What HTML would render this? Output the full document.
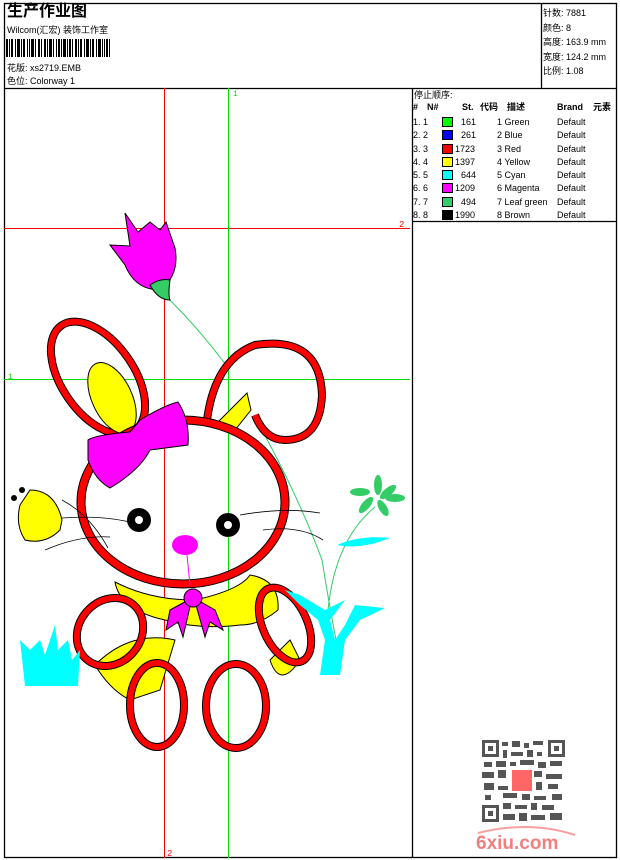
<!DOCTYPE html>
<html><head><meta charset="utf-8"><style>
*{margin:0;padding:0;box-sizing:border-box}
body{width:620px;height:860px;background:#fff;position:relative;overflow:hidden;font-family:"Liberation Sans","Noto Sans CJK SC",sans-serif;color:#000}
.a{position:absolute;white-space:nowrap}
.s{font-size:9px;line-height:11px}
</style></head><body>
<svg width="620" height="860" style="position:absolute;left:0;top:0" xmlns="http://www.w3.org/2000/svg">
<g fill="none" stroke="#000" stroke-width="1.3">
<rect x="4.5" y="3.5" width="612" height="854"/>
<line x1="4" y1="88.5" x2="617" y2="88.5"/>
<line x1="541.5" y1="3" x2="541.5" y2="88"/>
<line x1="412.5" y1="88" x2="412.5" y2="858"/>
<line x1="412" y1="221.5" x2="617" y2="221.5"/>
</g>
<g fill="#000">
<rect x="6" y="39" width="2" height="18"/><rect x="9" y="39" width="1" height="18"/><rect x="11" y="39" width="2" height="18"/><rect x="15" y="39" width="1" height="18"/><rect x="17" y="39" width="3" height="18"/><rect x="21" y="39" width="1" height="18"/><rect x="23" y="39" width="2" height="18"/><rect x="27" y="39" width="1" height="18"/><rect x="29" y="39" width="1" height="18"/><rect x="31" y="39" width="3" height="18"/><rect x="35" y="39" width="1" height="18"/><rect x="38" y="39" width="2" height="18"/><rect x="41" y="39" width="1" height="18"/><rect x="44" y="39" width="2" height="18"/><rect x="47" y="39" width="1" height="18"/><rect x="49" y="39" width="3" height="18"/><rect x="53" y="39" width="1" height="18"/><rect x="56" y="39" width="1" height="18"/><rect x="58" y="39" width="2" height="18"/><rect x="61" y="39" width="1" height="18"/><rect x="63" y="39" width="3" height="18"/><rect x="67" y="39" width="1" height="18"/><rect x="69" y="39" width="2" height="18"/><rect x="72" y="39" width="1" height="18"/><rect x="75" y="39" width="2" height="18"/><rect x="78" y="39" width="1" height="18"/><rect x="80" y="39" width="2" height="18"/><rect x="84" y="39" width="1" height="18"/><rect x="86" y="39" width="3" height="18"/><rect x="90" y="39" width="1" height="18"/><rect x="92" y="39" width="2" height="18"/><rect x="96" y="39" width="1" height="18"/><rect x="98" y="39" width="3" height="18"/><rect x="102" y="39" width="1" height="18"/><rect x="104" y="39" width="1" height="18"/><rect x="106" y="39" width="2" height="18"/><rect x="109" y="39" width="1" height="18"/>
</g>
<line x1="164.5" y1="88" x2="164.5" y2="858" stroke="#f00"/>
<line x1="4" y1="228.5" x2="410" y2="228.5" stroke="#f00"/>
<line x1="228.5" y1="88" x2="228.5" y2="858" stroke="#0d0"/>
<line x1="4" y1="379.5" x2="410" y2="379.5" stroke="#0d0"/>
<text x="233" y="96" font-size="8" fill="#0d0" font-family="Liberation Mono">1</text>
<text x="8" y="379" font-size="8" fill="#0d0" font-family="Liberation Mono">1</text>
<text x="399" y="227" font-size="9" fill="#f00" font-family="Liberation Mono">2</text>
<text x="167" y="856" font-size="9" fill="#f00" font-family="Liberation Mono">2</text>
<path d="M168 298 Q200 330 226 365" stroke="#3c6" fill="none"/>
<path d="M262 430 Q300 500 322 560 Q330 610 338 650" stroke="#3c6" fill="none"/>
<path d="M375 507 Q335 540 328 610" stroke="#3c6" fill="none"/>
<path d="M125 213 L138 232 L150 222 L160 230 L166 222 L175 248 Q180 275 160 290 Q135 290 125 265 L110 245 L130 246 Z" fill="#f0f" stroke="#000"/>
<path d="M150 285 Q160 278 170 280 Q168 295 170 300 Q158 300 150 285Z" fill="#3c6" stroke="#000"/>
<g fill="none">
<ellipse cx="98" cy="378" rx="36" ry="64" transform="rotate(-35 98 378)" stroke="#000" stroke-width="8"/>
<ellipse cx="98" cy="378" rx="36" ry="64" transform="rotate(-35 98 378)" stroke="#f00" stroke-width="6"/>
<path d="M207 420 Q215 360 255 345 Q320 335 322 395 Q320 440 285 440 Q265 440 255 415" stroke="#000" stroke-width="8"/>
<path d="M207 420 Q215 360 255 345 Q320 335 322 395 Q320 440 285 440 Q265 440 255 415" stroke="#f00" stroke-width="6"/>
</g>
<ellipse cx="112" cy="398" rx="20" ry="38" transform="rotate(-25 112 398)" fill="#ff0" stroke="#000"/>
<path d="M218 422 L247 393 L251 410 L235 430Z" fill="#ff0" stroke="#000"/>
<ellipse cx="183" cy="502" rx="102" ry="82" fill="none" stroke="#000" stroke-width="9"/>
<ellipse cx="183" cy="502" rx="102" ry="82" fill="none" stroke="#f00" stroke-width="7"/>
<path d="M88 440 Q95 435 130 432 L140 420 Q165 405 178 402 Q190 420 188 445 L150 450 Q140 470 110 488 Q95 480 88 460Z" fill="#f0f" stroke="#000"/>
<g stroke="#000" fill="none" stroke-width="0.8">
<path d="M62 518 Q100 515 130 522"/><path d="M45 550 Q80 535 110 537"/><path d="M240 515 Q285 507 320 513"/><path d="M263 530 Q300 525 323 540"/>
<path d="M62 500 Q90 515 108 548"/>
</g>
<circle cx="139" cy="520" r="12" fill="#000"/><circle cx="139" cy="520" r="4" fill="#fff"/>
<circle cx="228" cy="525" r="12" fill="#000"/><circle cx="228" cy="525" r="4" fill="#fff"/>
<ellipse cx="185" cy="545" rx="13" ry="10" fill="#f0f"/>
<line x1="187" y1="555" x2="190" y2="585" stroke="#f0f"/>
<path d="M20 505 L30 490 Q55 490 62 520 L60 530 Q45 545 25 540 Q15 525 20 505Z" fill="#ff0" stroke="#000"/>
<circle cx="22" cy="490" r="3" fill="#000"/><circle cx="14" cy="498" r="3" fill="#000"/>
<path d="M115 582 Q150 600 195 600 Q240 590 250 575 Q280 580 278 610 Q260 625 240 625 Q200 630 165 620 Q120 610 115 582Z" fill="#ff0" stroke="#000"/>
<path d="M95 665 Q110 690 130 700 L160 690 L175 640 Q130 630 95 665Z" fill="#ff0" stroke="#000"/>
<path d="M270 660 Q280 690 300 660 L290 640Z" fill="#ff0" stroke="#000"/>
<ellipse cx="110" cy="632" rx="31" ry="36" transform="rotate(40 110 632)" fill="none" stroke="#000" stroke-width="8"/>
<ellipse cx="110" cy="632" rx="31" ry="36" transform="rotate(40 110 632)" fill="none" stroke="#f00" stroke-width="6"/>
<ellipse cx="285" cy="625" rx="22" ry="40" transform="rotate(-25 285 625)" fill="none" stroke="#000" stroke-width="8"/>
<ellipse cx="285" cy="625" rx="22" ry="40" transform="rotate(-25 285 625)" fill="none" stroke="#f00" stroke-width="6"/>
<ellipse cx="157" cy="705" rx="27" ry="42" fill="none" stroke="#000" stroke-width="8"/>
<ellipse cx="157" cy="705" rx="27" ry="42" fill="none" stroke="#f00" stroke-width="6"/>
<ellipse cx="236" cy="706" rx="30" ry="42" fill="none" stroke="#000" stroke-width="8"/>
<ellipse cx="236" cy="706" rx="30" ry="42" fill="none" stroke="#f00" stroke-width="6"/>
<path d="M192 598 L170 610 L166 630 L178 622 L183 637 Z" fill="#f0f" stroke="#000"/>
<path d="M194 598 L215 610 L223 630 L210 622 L205 637 Z" fill="#f0f" stroke="#000"/>
<circle cx="193" cy="598" r="9" fill="#f0f" stroke="#000"/>
<path d="M20 640 L30 650 L40 640 L45 655 L55 625 L58 650 L68 640 L72 660 L80 650 L78 686 L25 686 Z" fill="#0ff"/>
<path d="M285 590 L300 605 L318 620 L325 640 L320 675 L340 675 L345 640 L360 620 L385 608 L355 605 L345 625 L335 640 L330 620 L345 600 L325 610 L300 595Z" fill="#0ff"/>
<path d="M337 545 Q360 535 390 538 Q360 550 337 545Z" fill="#0ff"/>
<g fill="#3c6"><ellipse cx="378" cy="485" rx="4" ry="10"/><ellipse cx="388" cy="492" rx="4" ry="10" transform="rotate(50 388 492)"/><ellipse cx="395" cy="498" rx="10" ry="4"/><ellipse cx="383" cy="508" rx="4" ry="9" transform="rotate(-30 383 508)"/><ellipse cx="366" cy="505" rx="4" ry="10" transform="rotate(40 366 505)"/><ellipse cx="360" cy="492" rx="10" ry="4"/></g>
<g fill="#555">
<rect x="482" y="740" width="17" height="17"/><rect x="548" y="740" width="17" height="17"/><rect x="482" y="805" width="17" height="17"/>
<rect x="502" y="742" width="6" height="4"/><rect x="512" y="741" width="8" height="6"/><rect x="524" y="743" width="5" height="5"/><rect x="533" y="741" width="10" height="4"/>
<rect x="503" y="750" width="4" height="8"/><rect x="511" y="752" width="12" height="4"/><rect x="527" y="750" width="6" height="7"/><rect x="537" y="752" width="5" height="4"/>
<rect x="484" y="762" width="8" height="5"/><rect x="496" y="761" width="10" height="6"/><rect x="510" y="762" width="6" height="4"/><rect x="520" y="760" width="14" height="5"/><rect x="538" y="762" width="8" height="6"/><rect x="550" y="761" width="12" height="5"/>
<rect x="482" y="772" width="12" height="6"/><rect x="498" y="770" width="8" height="8"/><rect x="534" y="771" width="8" height="6"/><rect x="546" y="774" width="16" height="5"/>
<rect x="484" y="783" width="10" height="7"/><rect x="498" y="786" width="10" height="4"/><rect x="536" y="782" width="6" height="8"/><rect x="548" y="784" width="10" height="5"/>
<rect x="485" y="795" width="6" height="5"/><rect x="503" y="793" width="14" height="5"/><rect x="522" y="794" width="8" height="6"/><rect x="534" y="796" width="12" height="4"/><rect x="552" y="794" width="10" height="6"/>
<rect x="503" y="803" width="8" height="6"/><rect x="515" y="805" width="12" height="4"/><rect x="531" y="803" width="6" height="7"/><rect x="542" y="805" width="12" height="5"/>
<rect x="503" y="814" width="12" height="6"/><rect x="519" y="813" width="8" height="8"/><rect x="531" y="815" width="14" height="5"/><rect x="550" y="813" width="12" height="7"/>
</g>
<g fill="#fff"><rect x="485" y="743" width="11" height="11"/><rect x="551" y="743" width="11" height="11"/><rect x="485" y="808" width="11" height="11"/></g>
<g fill="#555"><rect x="488" y="746" width="5" height="5"/><rect x="554" y="746" width="5" height="5"/><rect x="488" y="811" width="5" height="5"/></g>
<rect x="512" y="770" width="20" height="21" fill="#f66"/>
<path d="M478 833 Q530 820 575 835" stroke="#f8a0a0" stroke-width="2" fill="none"/>
<text x="476" y="849" font-size="19" font-weight="bold" fill="#f07f7f" font-family="Liberation Sans">6xiu.com</text>
</svg>
<div class="a" style="left:7px;top:3px;font-size:16px;font-weight:bold;line-height:18px">生产作业图</div>
<div class="a s" style="left:7px;top:25px">Wilcom(汇宏) 装饰工作室</div>
<div class="a s" style="left:7px;top:63px">花版: xs2719.EMB</div>
<div class="a s" style="left:7px;top:76px">色位: Colorway 1</div>
<div class="a s" style="left:543px;top:6px;line-height:14.5px">针数: 7881<br>颜色: 8<br>高度: 163.9 mm<br>宽度: 124.2 mm<br>比例: 1.08</div>
<div class="a s" style="left:414px;top:90px">停止顺序:</div>
<div class="a s" style="left:413px;top:102px;font-weight:bold;text-decoration:underline">
<span class="a" style="left:0">#</span><span class="a" style="left:14px">N#</span><span class="a" style="left:49px">St.</span><span class="a" style="left:67px">代码</span><span class="a" style="left:94px">描述</span><span class="a" style="left:144px">Brand</span><span class="a" style="left:180px">元素</span></div>
<div class="a s" style="left:413px;top:116px;line-height:13.3px;width:200px">
<div style="position:relative;height:13.3px"><span class="a">1. 1</span><span class="a" style="left:29px;top:1px;width:11px;height:10px;background:#0f0;border:1px solid #000"></span><span class="a" style="left:48px">161</span><span class="a" style="left:84px">1 Green</span><span class="a" style="left:144px">Default</span></div>
<div style="position:relative;height:13.3px"><span class="a">2. 2</span><span class="a" style="left:29px;top:1px;width:11px;height:10px;background:#00f;border:1px solid #000"></span><span class="a" style="left:48px">261</span><span class="a" style="left:84px">2 Blue</span><span class="a" style="left:144px">Default</span></div>
<div style="position:relative;height:13.3px"><span class="a">3. 3</span><span class="a" style="left:29px;top:1px;width:11px;height:10px;background:#f00;border:1px solid #000"></span><span class="a" style="left:42px">1723</span><span class="a" style="left:84px">3 Red</span><span class="a" style="left:144px">Default</span></div>
<div style="position:relative;height:13.3px"><span class="a">4. 4</span><span class="a" style="left:29px;top:1px;width:11px;height:10px;background:#ff0;border:1px solid #000"></span><span class="a" style="left:42px">1397</span><span class="a" style="left:84px">4 Yellow</span><span class="a" style="left:144px">Default</span></div>
<div style="position:relative;height:13.3px"><span class="a">5. 5</span><span class="a" style="left:29px;top:1px;width:11px;height:10px;background:#0ff;border:1px solid #000"></span><span class="a" style="left:48px">644</span><span class="a" style="left:84px">5 Cyan</span><span class="a" style="left:144px">Default</span></div>
<div style="position:relative;height:13.3px"><span class="a">6. 6</span><span class="a" style="left:29px;top:1px;width:11px;height:10px;background:#f0f;border:1px solid #000"></span><span class="a" style="left:42px">1209</span><span class="a" style="left:84px">6 Magenta</span><span class="a" style="left:144px">Default</span></div>
<div style="position:relative;height:13.3px"><span class="a">7. 7</span><span class="a" style="left:29px;top:1px;width:11px;height:10px;background:#3c6;border:1px solid #000"></span><span class="a" style="left:48px">494</span><span class="a" style="left:84px">7 Leaf green</span><span class="a" style="left:144px">Default</span></div>
<div style="position:relative;height:13.3px"><span class="a">8. 8</span><span class="a" style="left:29px;top:1px;width:11px;height:10px;background:#000;border:1px solid #000"></span><span class="a" style="left:42px">1990</span><span class="a" style="left:84px">8 Brown</span><span class="a" style="left:144px">Default</span></div>
</div>
</body></html>
